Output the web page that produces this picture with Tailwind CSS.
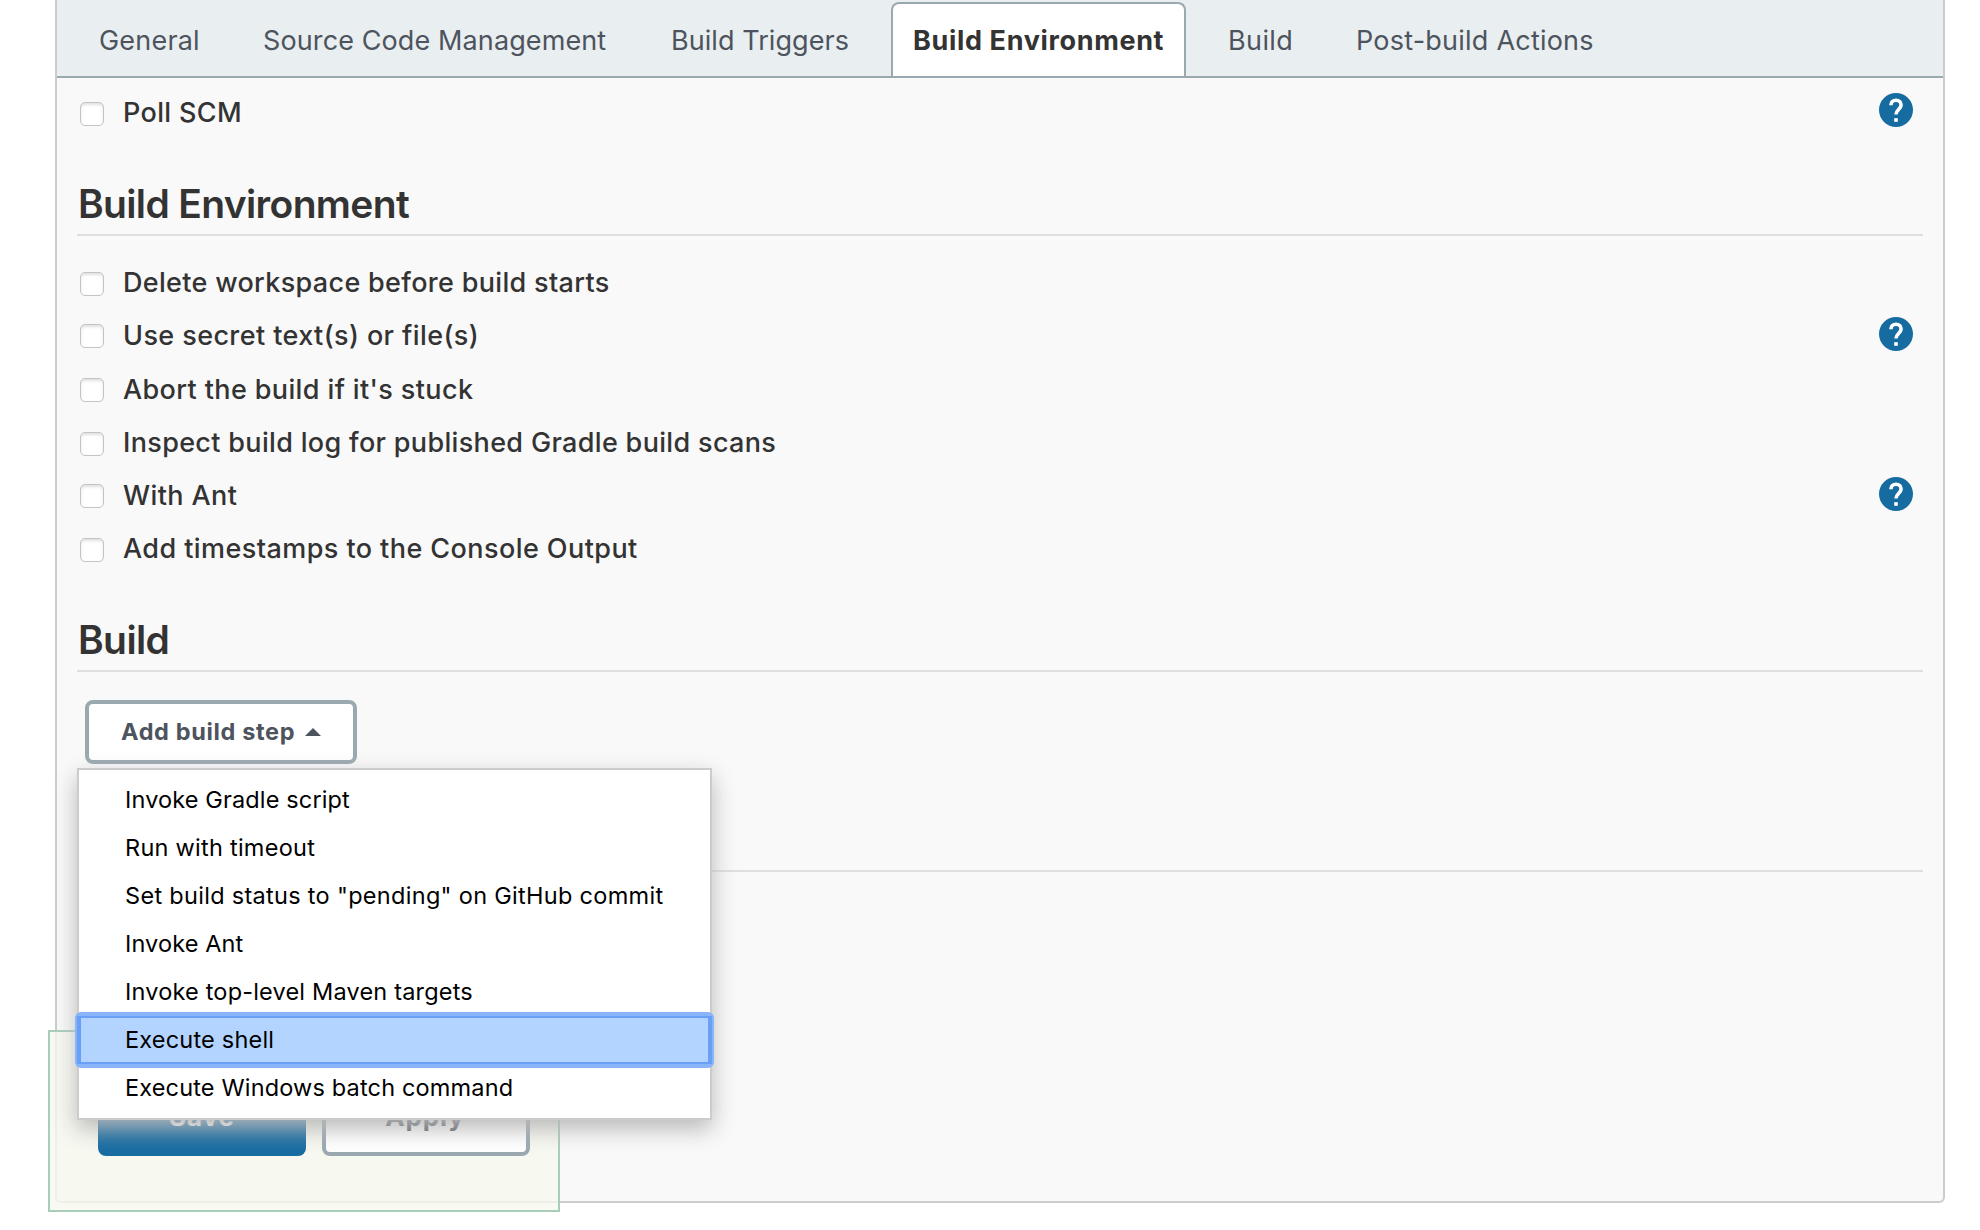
<!DOCTYPE html>
<html lang="en">
<head>
<meta charset="utf-8">
<title>Job configuration</title>
<script src="https://cdn.jsdelivr.net/npm/@tailwindcss/browser@4"></script>
</head>
<body class="relative h-[1230px] overflow-hidden bg-white font-[Inter,sans-serif] text-[#333]">
<svg class="hidden">
  <symbol id="help" viewBox="0 0 34 34">
    <circle cx="17" cy="17" r="17" fill="#166ba1"/>
    <path d="M11.9 12.2c0-3 2.2-5 5.1-5s5.1 2 5.1 4.9c0 3.8-5.1 4.6-5.1 9.4" fill="none" stroke="#fff" stroke-width="3.6"/>
    <rect x="15.2" y="25.2" width="3.6" height="3.6" fill="#fff"/>
  </symbol>
</svg>

<!-- Configuration panel -->
<main class="ml-[55px] flex h-[1203px] w-[1890px] flex-col rounded-b-[6px] border-2 border-t-0 border-[#ccc] bg-[#f9f9f9]">
  <nav class="flex h-[78px] shrink-0 border-b-2 border-[#9aa8b0] bg-[#e9eef1] pt-[2px] pl-5 text-[27px] whitespace-nowrap text-[#4d545d]">
    <a class="flex w-[164px] items-center pt-[4px] pl-[22px] tracking-[0.2px]">General</a>
    <a class="flex w-[407px] items-center pt-[4px] pl-[22px] tracking-[0.11px]">Source Code Management</a>
    <a class="flex w-[243px] items-center pt-[4px] pl-[23px] tracking-[0.06px]">Build Triggers</a>
    <a class="flex w-[295px] items-center rounded-t-[8px] border-2 border-b-0 border-[#9aa8b0] bg-white pt-[2px] pl-[20px] font-bold tracking-[0.65px] text-[#333]">Build Environment</a>
    <a class="ml-[19px] flex w-[127px] items-center pt-[4px] pl-[23px] tracking-[0.4px]">Build</a>
    <a class="flex items-center pt-[4px] pl-[24px] tracking-[0.22px]">Post-build Actions</a>
  </nav>

  <div class="flex flex-col px-5 text-[27px] font-medium">
    <div class="flex h-[94px] items-start pt-6">
      <span class="ml-[3px] size-6 rounded-[5px] border border-[#c4c4c4] bg-white shadow-[inset_0_2px_3px_#e0e0e0]"></span>
      <span class="-mt-[3px] ml-[19px] leading-7 tracking-[0.35px]">Poll SCM</span>
      <svg class="-mt-[9px] mr-[10px] ml-auto size-[34px]"><use href="#help"/></svg>
    </div>

    <h2 class="h-[64px] border-b-2 border-[#dfdfdf] pt-[8px] pl-px text-[39px] leading-[48px] font-semibold tracking-[-0.65px]">Build Environment</h2>
    <div class="flex flex-col pt-9">
      <div class="flex h-[52px] items-start">
        <span class="ml-[3px] size-6 rounded-[5px] border border-[#c4c4c4] bg-white shadow-[inset_0_2px_3px_#e0e0e0]"></span>
        <span class="-mt-[3px] ml-[19px] leading-7 tracking-[0.32px]">Delete workspace before build starts</span>
      </div>
      <div class="flex h-[54px] items-start">
        <span class="ml-[3px] size-6 rounded-[5px] border border-[#c4c4c4] bg-white shadow-[inset_0_2px_3px_#e0e0e0]"></span>
        <span class="-mt-[2px] ml-[19px] leading-7 tracking-[0.4px]">Use secret text(s) or file(s)</span>
        <svg class="-mt-[7px] mr-[10px] ml-auto size-[34px]"><use href="#help"/></svg>
      </div>
      <div class="flex h-[54px] items-start">
        <span class="ml-[3px] size-6 rounded-[5px] border border-[#c4c4c4] bg-white shadow-[inset_0_2px_3px_#e0e0e0]"></span>
        <span class="-mt-[2px] ml-[19px] leading-7 tracking-[0.38px]">Abort the build if it's stuck</span>
      </div>
      <div class="flex h-[52px] items-start">
        <span class="ml-[3px] size-6 rounded-[5px] border border-[#c4c4c4] bg-white shadow-[inset_0_2px_3px_#e0e0e0]"></span>
        <span class="-mt-[3px] ml-[19px] leading-7 tracking-[0.33px]">Inspect build log for published Gradle build scans</span>
      </div>
      <div class="flex h-[54px] items-start">
        <span class="ml-[3px] size-6 rounded-[5px] border border-[#c4c4c4] bg-white shadow-[inset_0_2px_3px_#e0e0e0]"></span>
        <span class="-mt-[2px] ml-[19px] leading-7 tracking-[0.4px]">With Ant</span>
        <svg class="-mt-[7px] mr-[10px] ml-auto size-[34px]"><use href="#help"/></svg>
      </div>
      <div class="flex h-[70px] items-start">
        <span class="ml-[3px] size-6 rounded-[5px] border border-[#c4c4c4] bg-white shadow-[inset_0_2px_3px_#e0e0e0]"></span>
        <span class="-mt-[3px] ml-[19px] leading-7 tracking-[0.43px]">Add timestamps to the Console Output</span>
      </div>
    </div>

    <h2 class="h-[64px] border-b-2 border-[#dfdfdf] pt-[8px] pl-px text-[39px] leading-[48px] font-semibold tracking-[-0.6px]">Build</h2>
    <div class="flex h-[200px] items-start border-b-2 border-[#dfdfdf] pt-7 pl-2">
      <button class="flex h-16 w-[272px] items-center rounded-[8px] border-4 border-[#9aa8b0] bg-white pl-[32px] text-[23.5px] font-bold tracking-[0.65px] text-[#4d545d]">Add build step<svg class="-mt-px ml-[10px] h-2 w-4" viewBox="0 0 16 8"><path d="M0 8L8 0l8 8z" fill="#4d545d"/></svg></button>
    </div>
  </div>
</main>

<!-- Sticky save bar, floating over the panel -->
<div class="absolute top-[1030px] left-[48px] flex h-[182px] w-[512px] items-start gap-4 border-2 border-[#a9cdbb] bg-[#f6f7ee]/80 pt-11 pl-12 text-[26px] font-bold">
  <button class="h-20 w-[208px] rounded-[8px] bg-[#166ba1] tracking-[0.9px] text-white">Save</button>
  <button class="h-20 w-[208px] rounded-[8px] border-4 border-[#9aa8b0] bg-white pr-[2px] tracking-[0.9px] text-[#4d545d]">Apply</button>
</div>

<!-- Build step menu -->
<ul class="absolute top-[768px] left-[77px] flex w-[635px] flex-col border-2 border-[#ccc] bg-white pt-[6px] pb-[6px] text-[23.5px] leading-[47px] text-black shadow-[0_9px_22px_#b8b8b8]">
  <li class="h-12 pl-[46px] tracking-[0.14px]">Invoke Gradle script</li>
  <li class="h-12 pl-[46px] tracking-[0.26px]">Run with timeout</li>
  <li class="h-12 pl-[46px] tracking-[0.3px]">Set build status to "pending" on GitHub commit</li>
  <li class="h-12 pl-[46px] tracking-[0.12px]">Invoke Ant</li>
  <li class="h-12 pl-[46px] tracking-[0.19px]">Invoke top-level Maven targets</li>
  <li class="relative h-12 bg-[#b3d4ff] pl-[46px] tracking-[0.2px]">Execute shell<span class="absolute -inset-1 rounded-[6px] border-4 border-[#88b4f8]"></span><span class="absolute -inset-x-0.5 inset-y-0 border-x-4 border-y-2 border-[#699ff7]"></span></li>
  <li class="h-12 pl-[46px] tracking-[0.16px]">Execute Windows batch command</li>
</ul>
</body>
</html>
